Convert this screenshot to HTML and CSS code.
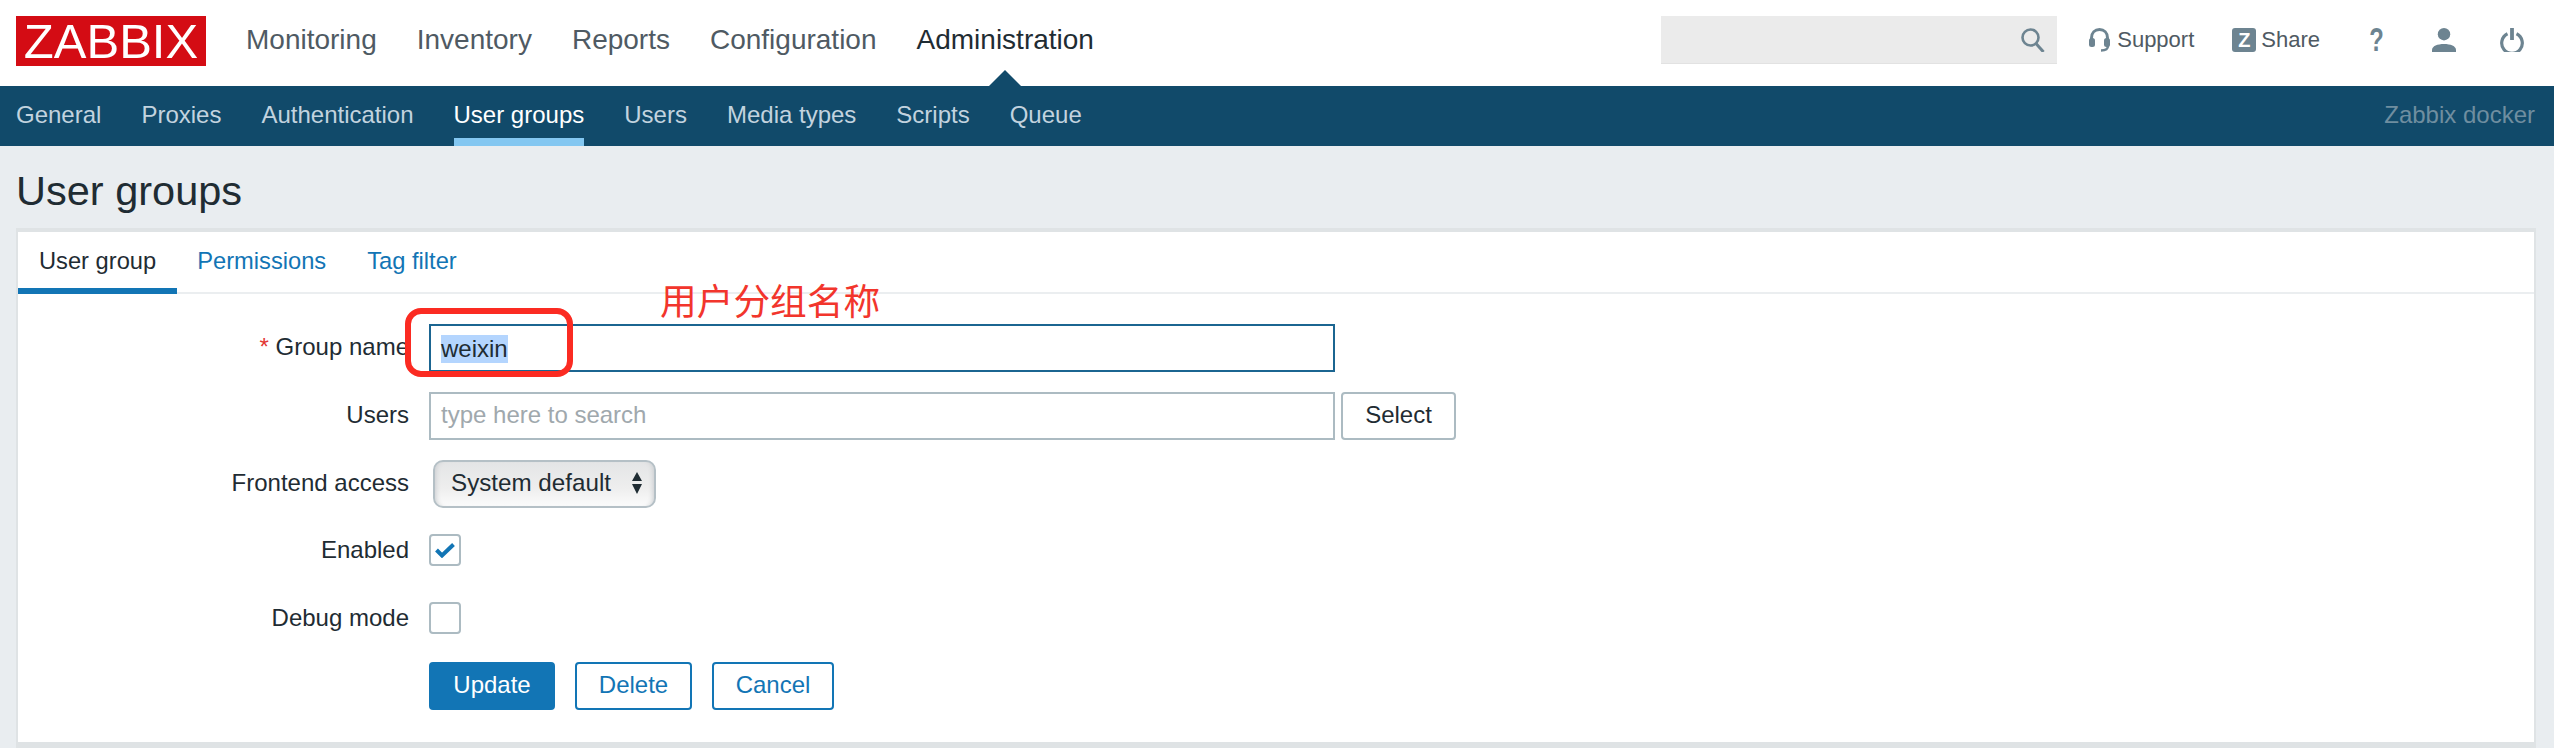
FILE: index.html
```html
<!DOCTYPE html>
<html lang="en">
<head>
<meta charset="utf-8">
<title>User groups</title>
<link rel="stylesheet" href="styles.css">
</head>
<body>
<header class="top">
  <div class="logo">ZABBIX</div>
  <nav class="mainnav">
    <a>Monitoring</a><a>Inventory</a><a>Reports</a><a>Configuration</a><a class="active">Administration</a>
  </nav>
  <div class="tools">
    <div class="search">
      <svg width="24" height="24" viewBox="0 0 24 24"><circle cx="9.5" cy="9.5" r="8" fill="none" stroke="#6d8491" stroke-width="2.6"/><path d="M15 15.5 L22.5 24" stroke="#6d8491" stroke-width="3" fill="none"/></svg>
    </div>
    <a class="tool support">
      <svg width="21" height="24" viewBox="0 0 21 24"><path d="M2.5 13 V10 C2.5 4.5 6 1.5 10.5 1.5 C15 1.5 18.5 4.5 18.5 10 V13" fill="none" stroke="#6d8491" stroke-width="3"/><rect x="0" y="10" width="6" height="9" rx="2.5" fill="#6d8491"/><rect x="15" y="10" width="6" height="9" rx="2.5" fill="#6d8491"/><path d="M19 18 C19 21 16.5 22.5 12 22.5" fill="none" stroke="#6d8491" stroke-width="2.4"/></svg>
      <span>Support</span>
    </a>
    <a class="tool share"><span class="zbox">Z</span><span>Share</span></a>
    <span class="help">?</span>
    <svg class="user" width="24" height="24" viewBox="0 0 24 24"><circle cx="12" cy="6.2" r="6.2" fill="#6d8491"/><path d="M0 24 V22 C0 18 5.5 16 12 16 C18.5 16 24 18 24 22 V24 Z" fill="#6d8491"/></svg>
    <svg class="power" width="24" height="24" viewBox="0 0 24 24"><path d="M7.5 5.8 A10.3 10.3 0 1 0 16.5 5.8" fill="none" stroke="#6d8491" stroke-width="3.2"/><path d="M12 0 V12" stroke="#6d8491" stroke-width="3.8"/></svg>
  </div>
</header>
<nav class="subnav">
  <a>General</a><a>Proxies</a><a>Authentication</a><a class="active">User groups</a><a>Users</a><a>Media types</a><a>Scripts</a><a>Queue</a>
  <span class="server">Zabbix docker</span>
</nav>
<main class="page">
  <h1>User groups</h1>
  <section class="card">
    <div class="tabs">
      <a class="active">User group</a><a>Permissions</a><a>Tag filter</a>
    </div>
    <form class="form">
      <div class="row">
        <label><span class="req">*</span> Group name</label>
        <div class="input focus"><span class="sel">weixin</span></div>
      </div>
      <div class="row">
        <label>Users</label>
        <div class="input ph">type here to search</div>
        <button type="button" class="btn-select">Select</button>
      </div>
      <div class="row row-last-field">
        <label>Frontend access</label>
        <div class="dropdown"><span>System default</span>
          <svg width="10" height="22" viewBox="0 0 10 22"><path d="M5 0 L10 9 H0 Z M5 22 L0 12 H10 Z" fill="#1f2c33"/></svg>
        </div>
      </div>
      <div class="row row-check">
        <label>Enabled</label>
        <div class="check"><svg width="20" height="15" viewBox="0 0 20 15"><path d="M1.5 7 L7 12.5 L18.5 1.5" fill="none" stroke="#1275b5" stroke-width="4"/></svg></div>
      </div>
      <div class="row row-check">
        <label>Debug mode</label>
        <div class="check"></div>
      </div>
      <div class="actions">
        <button type="button" class="btn primary">Update</button>
        <button type="button" class="btn">Delete</button>
        <button type="button" class="btn">Cancel</button>
      </div>
    </form>
    <div class="note-box"></div>
    <div class="note-text">用户分组名称</div>
  </section>
</main>
</body>
</html>
```
FILE: styles.css
```css
* { box-sizing: border-box; }
html, body { margin: 0; height: 748px; overflow: hidden; }
body { font-family: "Liberation Sans", Arial, sans-serif; background: #e9edf0; color: #1f2c33; }

.top { height: 86px; background: #fff; display: flex; align-items: flex-start; padding: 16px 0 0 16px; }
.logo { width: 190px; height: 50px; background: #d40c14; color: #fff; font-size: 49px; line-height: 50px; text-align: center; flex: none; }
.mainnav { display: flex; gap: 40px; margin-left: 40px; font-size: 28px; line-height: 48px; color: #4f5a63; }
.mainnav .active { color: #1f2c33; position: relative; }
.mainnav .active::after { content: ""; position: absolute; left: 50%; margin-left: -16px; top: 54px; border: 16px solid transparent; border-top: 0; border-bottom-color: #114a6a; }

.tools { margin-left: auto; display: flex; align-items: center; height: 48px; padding-right: 30px; }
.search { width: 396px; height: 48px; background: #ebebeb; border-bottom: 1px solid #e2e2e2; display: flex; align-items: center; justify-content: flex-end; padding-right: 12px; }
.tool { display: flex; align-items: center; font-size: 22px; color: #4f5a63; }
.support { margin-left: 32px; gap: 7px; }
.share { margin-left: 38px; gap: 5px; }
.zbox { width: 24px; height: 24px; background: #6d8491; color: #fff; font-weight: 700; font-size: 20px; line-height: 24px; text-align: center; border-radius: 3px; }
.help { margin-left: 50px; width: 13px; display: flex; justify-content: center; font-size: 33px; line-height: 24px; font-weight: 700; color: #6d8491; transform: scaleX(.72); }
.user { margin-left: 49px; }
.power { margin-left: 44px; }

.subnav { height: 60px; background: #114a6a; display: flex; gap: 40px; padding-left: 16px; font-size: 24px; line-height: 58px; color: #c2d3df; }
.subnav .active { color: #fff; height: 60px; border-bottom: 8px solid #83c7f1; }
.server { margin-left: auto; padding-right: 19px; color: #6f8ea0; }

.page { padding: 0 18px 0 16px; }
h1 { margin: 0; height: 82px; font-size: 41.5px; font-weight: 400; line-height: 90px; color: #1f2c33; }
.card { position: relative; height: 520px; background: #fff; border: solid #dfe3e5; border-width: 4px 2px 6px; }

.tabs { display: flex; height: 62px; gap: 41px; padding-left: 21px; font-size: 23.7px; line-height: 58px; color: #1275b5; border-bottom: 2px solid #ebeef0; }
.tabs .active { color: #1f2c33; position: relative; }
.tabs .active::after { content: ""; position: absolute; left: -21px; right: -21px; bottom: -2px; height: 6px; background: #1275b5; }

.form { padding-top: 30px; font-size: 24px; }
.row { display: flex; align-items: center; min-height: 48px; margin-bottom: 20px; }
.row-last-field { margin-bottom: 18px; }
label { width: 391px; text-align: right; margin-right: 20px; padding-bottom: 2px; flex: none; }
.row-check label { padding-bottom: 0; }
.req { color: #e33734; }
.input { width: 906px; height: 48px; border: 2px solid #acbbc2; padding: 0 10px; line-height: 42px; background: #fff; }
.input.focus { border-color: #1b6591; }
.sel { background: #b4d5fe; display: inline-block; line-height: 28px; vertical-align: middle; }
.ph { color: #a0a8ad; }
.btn-select { margin-left: 6px; width: 115px; height: 48px; border: 2px solid #acbbc2; border-radius: 4px; background: #fff; font: inherit; color: #1f2c33; padding: 0 0 2px; }
.dropdown { margin-left: 4px; width: 223px; height: 48px; border: 2px solid #b5c0c6; border-radius: 10px; background: linear-gradient(#e4e5e6, #eeeeee 60%, #fbfbfb); box-shadow: inset 5px 0 5px -4px #c9cccf, inset -5px 0 5px -4px #c9cccf; display: flex; align-items: center; justify-content: space-between; padding: 0 12px 2px 16px; font-size: 24.2px; }
.check { width: 32px; height: 32px; border: 2px solid #acbbc2; border-radius: 4px; background: #fff; display: flex; align-items: center; justify-content: center; }
.actions { display: flex; gap: 20px; padding-left: 411px; margin-top: 2px; }
.btn { width: 117px; height: 48px; border: 2px solid #1275b5; border-radius: 4px; background: #fff; color: #1275b5; font: inherit; padding: 0 0 2px; }
.btn:last-child { width: 122px; }
.btn.primary { width: 126px; background: #1275b5; color: #fff; }

.note-box { position: absolute; left: 387px; top: 76px; width: 168px; height: 69px; border: 6px solid #fb2b22; border-radius: 16px; }
.note-text { position: absolute; left: 642px; top: 44px; font-family: "Noto Sans CJK SC", sans-serif; font-size: 36.7px; line-height: 46px; color: #f2352c; }
```
